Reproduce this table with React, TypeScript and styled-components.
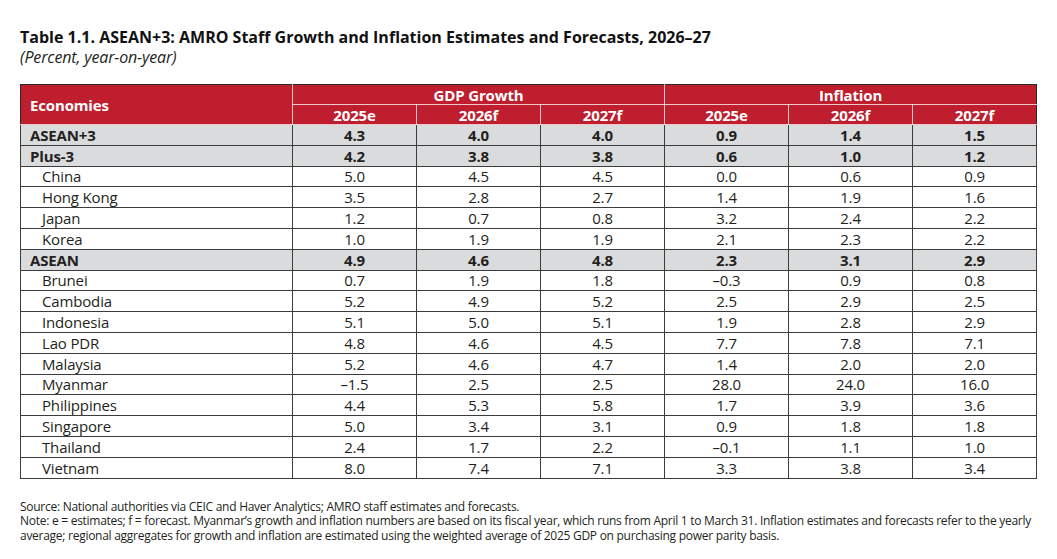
import styled, { createGlobalStyle } from "styled-components";

const GlobalStyle = createGlobalStyle`
  body {
    margin: 0;
    background: #ffffff;
    font-family: "Open Sans", "Noto Sans", sans-serif;
    color: #231f20;
  }
`;

const Page = styled.div`
  padding: 27px 21px 0 20px;
`;

const Title = styled.h1`
  margin: 0;
  font-size: 16px;
  line-height: 20px;
  font-weight: 700;
  letter-spacing: 0;
  color: #111111;
`;

const Subtitle = styled.div`
  font-size: 16px;
  line-height: 20px;
  font-style: italic;
  letter-spacing: -0.15px;
`;

const Table = styled.table`
  margin-top: 17px;
  width: 1016px;
  border-collapse: collapse;
  table-layout: fixed;
  font-size: 15px;
  letter-spacing: -0.15px;
`;

const HeadCell = styled.th<{ $wide?: boolean }>`
  height: 19px;
  padding: 0;
  background: #be1e2d;
  color: #ffffff;
  font-weight: 700;
  line-height: 18px;
  text-align: ${(p) => (p.$wide ? "left" : "center")};
  padding-left: ${(p) => (p.$wide ? "9px" : "0")};
  border: 1px solid rgba(255, 255, 255, 0.75);
  border-top: 1px solid #2a2a2a;
  &:first-child {
    border-left: 1px solid #2a2a2a;
  }
  &:last-child {
    border-right: 1px solid #2a2a2a;
  }
`;

const SubHeadCell = styled(HeadCell)`
  border-top: 1px solid rgba(255, 255, 255, 0.75);
`;

const Row = styled.tr<{ $group?: boolean }>`
  height: 20.8px;
  background: ${(p) => (p.$group ? "#d9dbdd" : "#ffffff")};
  font-weight: ${(p) => (p.$group ? 700 : 400)};
`;

const Label = styled.td<{ $indent?: boolean }>`
  padding: 0 0 0 ${(p) => (p.$indent ? "21px" : "9px")};
  border: 1px solid #3c3c3c;
  line-height: 18px;
  white-space: nowrap;
`;

const Value = styled.td`
  padding: 0;
  text-align: center;
  border: 1px solid #3c3c3c;
  line-height: 18px;
`;

const Notes = styled.div`
  margin-top: 21px;
  font-size: 12px;
  line-height: 14.7px;
  letter-spacing: -0.27px;
`;

const NoteLine = styled.div`
  white-space: nowrap;
`;

type Entry = { name: string; group?: boolean; values: string[] };

const rows: Entry[] = [
  { name: "ASEAN+3", group: true, values: ["4.3", "4.0", "4.0", "0.9", "1.4", "1.5"] },
  { name: "Plus-3", group: true, values: ["4.2", "3.8", "3.8", "0.6", "1.0", "1.2"] },
  { name: "China", values: ["5.0", "4.5", "4.5", "0.0", "0.6", "0.9"] },
  { name: "Hong Kong", values: ["3.5", "2.8", "2.7", "1.4", "1.9", "1.6"] },
  { name: "Japan", values: ["1.2", "0.7", "0.8", "3.2", "2.4", "2.2"] },
  { name: "Korea", values: ["1.0", "1.9", "1.9", "2.1", "2.3", "2.2"] },
  { name: "ASEAN", group: true, values: ["4.9", "4.6", "4.8", "2.3", "3.1", "2.9"] },
  { name: "Brunei", values: ["0.7", "1.9", "1.8", "–0.3", "0.9", "0.8"] },
  { name: "Cambodia", values: ["5.2", "4.9", "5.2", "2.5", "2.9", "2.5"] },
  { name: "Indonesia", values: ["5.1", "5.0", "5.1", "1.9", "2.8", "2.9"] },
  { name: "Lao PDR", values: ["4.8", "4.6", "4.5", "7.7", "7.8", "7.1"] },
  { name: "Malaysia", values: ["5.2", "4.6", "4.7", "1.4", "2.0", "2.0"] },
  { name: "Myanmar", values: ["–1.5", "2.5", "2.5", "28.0", "24.0", "16.0"] },
  { name: "Philippines", values: ["4.4", "5.3", "5.8", "1.7", "3.9", "3.6"] },
  { name: "Singapore", values: ["5.0", "3.4", "3.1", "0.9", "1.8", "1.8"] },
  { name: "Thailand", values: ["2.4", "1.7", "2.2", "–0.1", "1.1", "1.0"] },
  { name: "Vietnam", values: ["8.0", "7.4", "7.1", "3.3", "3.8", "3.4"] },
];

const years = ["2025e", "2026f", "2027f", "2025e", "2026f", "2027f"];

export default function App() {
  return (
    <Page>
      <GlobalStyle />
      <Title>
        Table 1.1. ASEAN+3: AMRO Staff Growth and Inflation Estimates and Forecasts, 2026–27
      </Title>
      <Subtitle>(Percent, year-on-year)</Subtitle>
      <Table>
        <colgroup>
          <col style={{ width: 272 }} />
          {years.map((_, i) => (
            <col key={i} style={{ width: 124 }} />
          ))}
        </colgroup>
        <thead>
          <tr>
            <HeadCell $wide rowSpan={2}>
              Economies
            </HeadCell>
            <HeadCell colSpan={3}>GDP Growth</HeadCell>
            <HeadCell colSpan={3}>Inflation</HeadCell>
          </tr>
          <tr>
            {years.map((y, i) => (
              <SubHeadCell key={i}>{y}</SubHeadCell>
            ))}
          </tr>
        </thead>
        <tbody>
          {rows.map((r) => (
            <Row key={r.name} $group={r.group}>
              <Label $indent={!r.group}>{r.name}</Label>
              {r.values.map((v, i) => (
                <Value key={i}>{v}</Value>
              ))}
            </Row>
          ))}
        </tbody>
      </Table>
      <Notes>
        <NoteLine>
          Source: National authorities via CEIC and Haver Analytics; AMRO staff estimates and forecasts.
        </NoteLine>
        <NoteLine>
          Note: e = estimates; f = forecast. Myanmar’s growth and inflation numbers are based on its fiscal year, which
          runs from April 1 to March 31. Inflation estimates and forecasts refer to the yearly
        </NoteLine>
        <NoteLine>
          average; regional aggregates for growth and inflation are estimated using the weighted average of 2025 GDP on
          purchasing power parity basis.
        </NoteLine>
      </Notes>
    </Page>
  );
}
